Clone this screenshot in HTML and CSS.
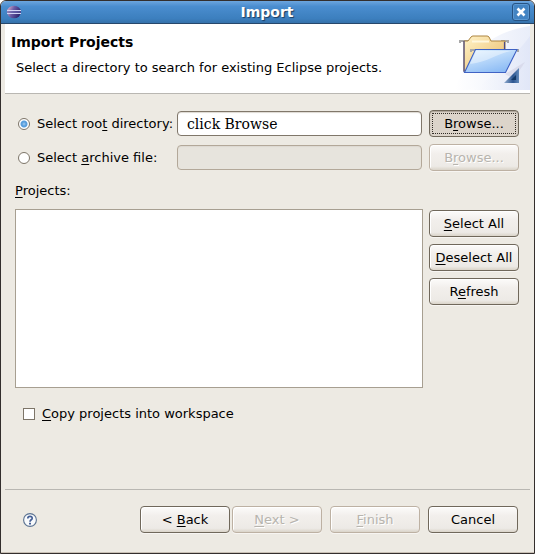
FILE: index.html
```html
<!DOCTYPE html>
<html lang="en">
<head>
<meta charset="utf-8">
<title>Import</title>
<link rel="stylesheet" href="styles.css">
</head>
<body>
<form class="window">
  <header class="titlebar">
    <svg class="app-icon" width="16" height="16" viewBox="0 0 16 16" aria-hidden="true">
      <defs>
        <linearGradient id="orb" x1="0" y1="0.3" x2="1" y2="0.7">
          <stop offset="0" stop-color="#d9a8c4"/>
          <stop offset="0.4" stop-color="#6a5ba6"/>
          <stop offset="1" stop-color="#241c66"/>
        </linearGradient>
      </defs>
      <ellipse cx="8" cy="8" rx="7" ry="6.300" fill="url(#orb)"/>
      <path d="M1 6.5h14M1 9.5h14" stroke="#d3d4f4" stroke-width="1"/>
      <path d="M1 8h14" stroke="#6668b0" stroke-width="1"/>
    </svg>
    <h1 class="title">Import</h1>
    <button class="close" type="button" aria-label="Close">
      <svg width="10" height="10" viewBox="0 0 10 10" aria-hidden="true"><path d="M1.500 1.500l7 7M8.500 1.500l-7 7" stroke="#fff" stroke-width="2.6"/></svg>
    </button>
  </header>
  <div class="body">
    <section class="banner">
      <div class="banner-text">
        <h2 class="heading">Import Projects</h2>
        <p class="description">Select a directory to search for existing Eclipse projects.</p>
      </div>
      <svg class="banner-art" width="75" height="66" viewBox="0 0 75 66" aria-hidden="true">
        <defs>
          <linearGradient id="sky" x1="0" y1="0" x2="1" y2="0">
            <stop offset="0" stop-color="#fff"/>
            <stop offset="1" stop-color="#dbe2f6"/>
          </linearGradient>
          <linearGradient id="back" x1="0" y1="0" x2="1" y2="1">
            <stop offset="0" stop-color="#fff3c9"/>
            <stop offset="1" stop-color="#e9b964"/>
          </linearGradient>
          <linearGradient id="front" x1="0" y1="0" x2="0.6" y2="1">
            <stop offset="0" stop-color="#e4f4ff"/>
            <stop offset="1" stop-color="#8dbcf5"/>
          </linearGradient>
          <linearGradient id="corner" x1="0" y1="0" x2="1" y2="0">
            <stop offset="0" stop-color="#93aed0"/>
            <stop offset="0.6" stop-color="#2c5590"/>
            <stop offset="1" stop-color="#6289b9"/>
          </linearGradient>
        </defs>
        <path d="M0 66C14 24 42 7 75 2V66z" fill="url(#sky)" opacity="0.6"/>
        <path d="M12 66C34 60 58 34 75 12V66z" fill="url(#sky)" opacity="0.6"/>
        <path d="M50 50l20-12-11 17z" fill="#c9c5d9" opacity="0.4"/>
        <path d="M5 19v-2h10M46 17h7v2" fill="none" stroke="#a8a8a8" stroke-width="2"/>
        <path d="M9 47V17h4l3-4q1-1 2-1h14q1 0 2 1l2 4h14v26z" fill="url(#back)" stroke="#ad8540"/>
        <path d="M17 17.500h17" stroke="#fff8de" stroke-width="2"/>
        <path d="M9 48V17M49.500 18v8" stroke="#4c4b86" stroke-width="1.200"/>
        <path d="M16 28v-2h8M57 26h6v2" fill="none" stroke="#a8a8a8" stroke-width="2"/>
        <path d="M20.500 25.500H62L50.500 48.500H9.500z" fill="url(#front)" stroke="#3f62c4" stroke-width="1.100"/>
        <path d="M21 27h36C46 28 33 38 15 40z" fill="#fff" opacity="0.4"/>
        <path d="M64 44v15H49z" fill="url(#corner)"/>
        <path d="M61 51v5h-5z" fill="#133867"/>
      </svg>
    </section>
    <main class="content">
      <div class="source">
        <label class="choice"><input class="radio" type="radio" name="source" checked><span>Select roo<u>t</u> directory:</span></label>
        <input class="field" type="text" value="click Browse" aria-label="Root directory">
        <button class="button focused" type="button">B<u>r</u>owse...</button>
        <label class="choice"><input class="radio" type="radio" name="source"><span>Select <u>a</u>rchive file:</span></label>
        <input class="field" type="text" aria-label="Archive file" disabled>
        <button class="button" type="button" disabled>B<u>r</u>owse...</button>
      </div>
      <p class="list-label" id="projects"><u>P</u>rojects:</p>
      <div class="projects">
        <div class="list" role="listbox" aria-labelledby="projects"></div>
        <div class="actions">
          <button class="button" type="button"><u>S</u>elect All</button>
          <button class="button" type="button"><u>D</u>eselect All</button>
          <button class="button" type="button">R<u>e</u>fresh</button>
        </div>
      </div>
      <label class="copy"><input class="check" type="checkbox"><span><u>C</u>opy projects into workspace</span></label>
    </main>
    <footer class="footer">
      <button class="help" type="button" aria-label="Help">
        <svg width="14" height="14" viewBox="0 0 14 14" aria-hidden="true">
          <circle cx="7" cy="7" r="6.400" fill="#f8fafc" stroke="#5b7291" stroke-width="1.100"/>
          <path d="M4.800 5.500C4.800 2.700 9.200 2.700 9.200 5.200 9.200 6.800 7 6.700 7 8.700" fill="none" stroke="#445f96" stroke-width="1.700"/>
          <path d="M6 9.800h2v1.700H6z" fill="#445f96"/>
        </svg>
      </button>
      <div class="steps">
        <button class="button" type="button">&lt; <u>B</u>ack</button>
        <button class="button" type="button" disabled><u>N</u>ext &gt;</button>
      </div>
      <button class="button" type="submit" disabled><u>F</u>inish</button>
      <button class="button" type="button">Cancel</button>
    </footer>
  </div>
</form>
</body>
</html>
```
FILE: styles.css
```css
* {
  box-sizing: border-box;
}

body {
  margin: 0;
  background: #fff;
  font: 13px/16px "DejaVu Sans", sans-serif;
  color: #000;
}

h1, h2, p {
  margin: 0;
  font-size: 13px;
}

u {
  text-decoration: underline 1px;
  text-underline-offset: 2px;
  text-decoration-skip-ink: none;
}

.window {
  display: flex;
  flex-direction: column;
  min-height: 100vh;
  border: 1px solid #332e2d;
  border-radius: 6px 6px 0 0;
  background: #edeae3;
  overflow: hidden;
}

.titlebar {
  display: flex;
  align-items: center;
  height: 23px;
  padding: 0 4px 0 5px;
  border-bottom: 1px solid #27476b;
  background: linear-gradient(#6ca5de, #4a8dcf 25%, #3c7fbe 80%, #3672ab);
}

.title {
  flex: 1;
  color: #fff;
  text-align: center;
  text-shadow: 1px 1px 1px #1c3c60;
}

.title,
.heading {
  font-size: 14px;
}

.close {
  display: grid;
  place-items: center;
  width: 18px;
  height: 18px;
  padding: 0;
  border: 1px solid #275382;
  border-radius: 3px;
  background: #4384c3;
  box-shadow: inset 0 0 0 1px #5c98d2;
}

.body {
  display: flex;
  flex: 1;
  flex-direction: column;
  padding: 0 4px;
  border-bottom: 1px solid #c9c0b5;
}

.banner {
  display: flex;
  justify-content: space-between;
  height: 70px;
  border-bottom: 1px solid #b9b7b2;
  background: #fff;
}

.banner-text {
  padding: 10px 0 0 6px;
}

.description {
  margin: 10px 0 0 5px;
}

.content {
  flex: 1;
  padding: 16px 11px 0 10px;
}

.source {
  display: grid;
  grid-template-columns: 155px 1fr 90px;
  gap: 7px;
  align-items: center;
}

.choice,
.copy {
  display: flex;
  align-items: center;
}

.choice {
  gap: 7px;
  padding-left: 3px;
  white-space: nowrap;
}

.radio,
.check {
  appearance: none;
  flex: none;
  width: 12px;
  height: 12px;
  margin: 0;
  border: 1px solid #7d7568;
  background: #fff;
}

.radio {
  border-radius: 50%;
}

.radio:checked {
  background: radial-gradient(circle, #a5cdf0 0, #5a9fdd 2px, #5a9fdd 3px, #fff 4px);
}

.field {
  width: 100%;
  min-width: 0;
  height: 25px;
  padding: 0 9px;
  border: 1px solid #80776a;
  border-radius: 4px;
  background: #fff;
  box-shadow: inset 0 1px 1px #ddd9d2;
  color: #000;
  font: 14px/18px "DejaVu Serif", serif;
}

.field:disabled {
  border-color: #b3a899;
  background: #e7e4dd;
}

.button {
  width: 90px;
  height: 27px;
  padding: 0;
  border: 1px solid #70685b;
  border-radius: 4px;
  background: linear-gradient(#fcfbfa, #f2efec 35%, #edeae6 85%, #dad4c9);
  box-shadow: inset 1px 1px 0 #fff, 0 1px 0 #f7f5f2;
  color: #000;
  font: inherit;
}

.button:disabled {
  border-color: #bdb1a3;
  color: #b7b4ae;
  text-shadow: 1px 1px 0 #fff;
}

.focused {
  background: #dcd4ca;
  box-shadow: inset 0 1px 1px #aaa196;
  outline: 1px dotted #302b25;
  outline-offset: -4px;
}

.list-label {
  margin-top: 12px;
}

.projects {
  display: flex;
  gap: 6px;
  margin-top: 10px;
}

.list {
  flex: 1;
  min-height: 179px;
  border: 1px solid #a79f91;
  background: #fff;
}

.actions {
  display: flex;
  flex-direction: column;
  gap: 7px;
  padding-top: 1px;
}

.copy {
  gap: 7px;
  margin-top: 18px;
  padding-left: 8px;
}

.footer {
  display: flex;
  gap: 8px;
  align-items: center;
  height: 63px;
  padding: 0 12px 3px 18px;
  border-top: 1px solid #b9b7b2;
}

.help {
  width: 14px;
  height: 14px;
  margin-right: auto;
  padding: 0;
  border: 0;
  background: none;
}

.help svg {
  display: block;
}

.steps {
  display: flex;
  gap: 2px;
}
```
